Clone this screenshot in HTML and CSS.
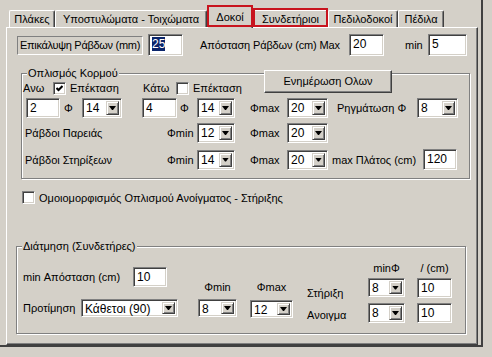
FILE: index.html
```html
<!DOCTYPE html>
<html lang="el">
<head>
  <meta charset="UTF-8">
  <title>Συνδετήριοι</title>
  <link rel="stylesheet" href="styles.css">
</head>
<body>
  <div class="window">
    <div class="tabs">
      <div class="tab w46">Πλάκες</div>
      <div class="tab w152">Υποστυλώματα - Τοιχώματα</div>
      <div class="tab active marked w46">Δοκοί</div>
      <div class="tab marked up w75">Συνδετήριοι</div>
      <div class="tab w70">Πεδιλοδοκοί</div>
      <div class="tab w46">Πέδιλα</div>
    </div>

    <div class="panel">
      <div class="row r-cover">
        <div class="lblbox ml10 w126">Επικάλυψη Ράβδων (mm)</div>
        <div class="edit ml5 w35 h22"><span class="sel">25</span></div>
        <span class="lbl ml17 w149 tight">Απόσταση Ράβδων (cm) Max</span>
        <div class="edit w35 h22">20</div>
        <span class="lbl ml21 w23">min</span>
        <div class="edit w39 h22">5</div>
      </div>

      <div class="group g-web">
        <div class="legend">Οπλισμός Κορμού</div>
        <div class="row r-a">
          <span class="lbl ml1 w30">Ανω</span>
          <div class="chk"><svg width="7" height="7" viewBox="0 0 7 7"><path d="M0.5 3 L2.5 5 L6.5 1" stroke="#000" stroke-width="2" fill="none"/></svg></div>
          <span class="lbl ml4 w73">Επέκταση</span>
          <span class="lbl w33">Κάτω</span>
          <div class="chk"></div>
          <span class="lbl ml4 w71">Επέκταση</span>
          <div class="btn">Ενημέρωση Ολων</div>
        </div>
        <div class="row r-b">
          <div class="edit ml4 w34 h20">2</div>
          <span class="lbl ml4 w18">Φ</span>
          <div class="combo w40 h20"><span class="val">14</span><span class="drop"></span></div>
          <div class="edit ml20 w35 h20">4</div>
          <span class="lbl ml3 w17">Φ</span>
          <div class="combo w38 h20"><span class="val">14</span><span class="drop"></span></div>
          <span class="lbl ml15 w37">Φmax</span>
          <div class="combo w41 h20"><span class="val">20</span><span class="drop"></span></div>
          <span class="lbl ml9 w80">Ρηγμάτωση Φ</span>
          <div class="combo w41 h20"><span class="val">8</span><span class="drop"></span></div>
        </div>
        <div class="row r-c">
          <span class="lbl ml3 w142">Ράβδοι Παρειάς</span>
          <span class="lbl w30">Φmin</span>
          <div class="combo w38 h20"><span class="val">12</span><span class="drop"></span></div>
          <span class="lbl ml15 w37">Φmax</span>
          <div class="combo w41 h20"><span class="val">20</span><span class="drop"></span></div>
        </div>
        <div class="row r-d">
          <span class="lbl ml3 w142">Ράβδοι Στηρίξεων</span>
          <span class="lbl w30">Φmin</span>
          <div class="combo w38 h20"><span class="val">14</span><span class="drop"></span></div>
          <span class="lbl ml15 w37">Φmax</span>
          <div class="combo w41 h20"><span class="val">20</span><span class="drop"></span></div>
          <span class="lbl ml4 w91">max Πλάτος (cm)</span>
          <div class="edit w34 h21">120</div>
        </div>
      </div>

      <div class="row r-uniform">
        <div class="chk"></div>
        <span class="lbl ml4">Ομοιομορφισμός Οπλισμού Ανοίγματος - Στήριξης</span>
      </div>

      <div class="group g-shear">
        <div class="legend">Διάτμηση (Συνδετήρες)</div>
        <div class="cols">
          <div class="col ml6">
            <div class="row mt15">
              <span class="lbl w110">min Απόσταση (cm)</span>
              <div class="edit w34 h20">10</div>
            </div>
            <div class="row mt12">
              <span class="lbl w58">Προτίμηση</span>
              <div class="combo w97 h18"><span class="val">Κάθετοι (90)</span><span class="drop"></span></div>
            </div>
          </div>
          <div class="col ml20 w39">
            <span class="lbl head mt29">Φmin</span>
            <div class="combo mt6 h18"><span class="val">8</span><span class="drop"></span></div>
          </div>
          <div class="col ml13 w43">
            <span class="lbl head mt29">Φmax</span>
            <div class="combo mt7 h18"><span class="val">12</span><span class="drop"></span></div>
          </div>
          <div class="col ml14 w38">
            <span class="lbl mt35">Στήριξη</span>
            <span class="lbl mt10">Ανοιγμα</span>
          </div>
          <div class="col ml23 w37">
            <span class="lbl head mt10">minΦ</span>
            <div class="combo mt4 h19"><span class="val">8</span><span class="drop"></span></div>
            <div class="combo mt6 h20"><span class="val">8</span><span class="drop"></span></div>
          </div>
          <div class="col ml12 w35">
            <span class="lbl head mt10">/ (cm)</span>
            <div class="edit mt4 h20">10</div>
            <div class="edit mt5 h20">10</div>
          </div>
        </div>
      </div>
    </div>
  </div>
</body>
</html>
```

FILE: styles.css
```css
* {
  margin: 0;
  padding: 0;
  box-sizing: border-box;
}

html, body {
  width: 492px;
  height: 357px;
  overflow: hidden;
}

body {
  background-color: #d4d0c8;
  font-family: "Liberation Sans", Arial, sans-serif;
  font-size: 11px;
  color: #000;
}

.window {
  width: 483px;
  height: 347px;
  border-right: 2px solid #404040;
  border-bottom: 2px solid #404040;
}

/* tab strip */
.tabs {
  display: flex;
  align-items: flex-end;
  height: 27px;
  padding-left: 9px;
}

.tab {
  position: relative;
  height: 17px;
  border: 1px solid;
  border-bottom: none;
  border-color: #fff #404040 transparent #fff;
  border-radius: 2px 2px 0 0;
  box-shadow: inset -1px 0 0 #808080;
  text-align: center;
  line-height: 16px;
  white-space: nowrap;
  flex-shrink: 0;
}

.tab.active {
  height: 23px;
  margin-bottom: -1px;
  z-index: 1;
  background-color: #d4d0c8;
  line-height: 22px;
}

.marked::after {
  content: '';
  position: absolute;
  left: -1px;
  right: -1px;
  top: -1px;
  bottom: 1px;
  border: 2px solid #c8141e;
}

.marked.up::after {
  top: -3px;
  bottom: 0;
}

/* page */
.panel {
  margin-left: 6px;
  width: 472px;
  height: 318px;
  border: 1px solid;
  border-color: #fff #404040 #404040 #fff;
  box-shadow: inset -1px -1px 0 #808080;
  display: flex;
  flex-direction: column;
  align-items: flex-start;
}

.row {
  display: flex;
  align-items: center;
  flex-shrink: 0;
}

.lbl {
  flex-shrink: 0;
  white-space: nowrap;
  line-height: 12px;
  height: 12px;
}

.lbl.head {
  text-align: center;
}

.tight {
  letter-spacing: -0.15px;
}

.lblbox {
  height: 19px;
  border: 1px solid;
  border-color: #808080 #fff #fff #808080;
  padding-left: 2px;
  line-height: 17px;
  letter-spacing: -0.3px;
  white-space: nowrap;
  flex-shrink: 0;
}

.edit {
  background-color: #fff;
  border: 1px solid;
  border-color: #808080 #fff #fff #808080;
  box-shadow: inset 1px 1px 0 #404040, inset -1px -1px 0 #d4d0c8;
  padding: 2px 3px;
  font-size: 12px;
  line-height: 14px;
  flex-shrink: 0;
}

.sel {
  background-color: #0a246a;
  color: #fff;
}

.combo {
  display: flex;
  background-color: #fff;
  border: 1px solid;
  border-color: #808080 #fff #fff #808080;
  box-shadow: inset 1px 1px 0 #404040, inset -1px -1px 0 #d4d0c8;
  padding: 2px;
  font-size: 12px;
  flex-shrink: 0;
}

.combo .val {
  flex: 1;
  padding: 1px 0 0 1px;
  line-height: 12px;
  white-space: nowrap;
}

.combo .drop {
  width: 13px;
  flex-shrink: 0;
  background-color: #d4d0c8;
  border: 1px solid;
  border-color: #d4d0c8 #404040 #404040 #d4d0c8;
  box-shadow: inset 1px 1px 0 #fff, inset -1px -1px 0 #808080;
  display: flex;
  align-items: center;
  justify-content: center;
}

.combo .drop::after {
  content: '';
  width: 7px;
  height: 4px;
  background-color: #000;
  clip-path: polygon(0 0, 7px 0, 4px 4px, 3px 4px);
}

.chk {
  width: 13px;
  height: 13px;
  flex-shrink: 0;
  background-color: #fff;
  border: 1px solid;
  border-color: #808080 #fff #fff #808080;
  box-shadow: inset 1px 1px 0 #404040, inset -1px -1px 0 #d4d0c8;
  display: flex;
  align-items: center;
  justify-content: center;
}

.btn {
  width: 128px;
  height: 23px;
  flex-shrink: 0;
  align-self: flex-end;
  margin-bottom: 2px;
  background-color: #d4d0c8;
  border: 1px solid;
  border-color: #fff #404040 #404040 #fff;
  box-shadow: inset -1px -1px 0 #808080;
  text-align: center;
  line-height: 20px;
}

/* group boxes */
.group {
  border: 1px solid #808080;
  box-shadow: inset 1px 1px 0 #fff, 1px 1px 0 #fff;
  display: flex;
  flex-direction: column;
  align-items: flex-start;
  flex-shrink: 0;
}

.legend {
  background-color: #d4d0c8;
  padding: 0 1px;
  height: 12px;
  line-height: 12px;
  margin: -7px 0 0 5px;
  white-space: nowrap;
}

.r-cover { margin-top: 6px; height: 22px; }
.g-web { margin: 17px 0 0 14px; width: 449px; height: 106px; }
.r-a { margin-top: 2px; height: 14px; }
.r-b { margin-top: 3px; height: 20px; }
.r-c { margin-top: 5px; height: 20px; }
.r-d { margin-top: 6px; height: 21px; }
.r-uniform { margin: 12px 0 0 15px; height: 13px; }
.g-shear { margin: 42px 0 0 9px; width: 450px; height: 88px; }

.cols {
  display: flex;
  align-items: flex-start;
}

.col {
  display: flex;
  flex-direction: column;
  align-items: stretch;
  flex-shrink: 0;
}

/* sizes */
.w17 { width: 17px; }
.w18 { width: 18px; }
.w23 { width: 23px; }
.w30 { width: 30px; }
.w33 { width: 33px; }
.w34 { width: 34px; }
.w35 { width: 35px; }
.w37 { width: 37px; }
.w38 { width: 38px; }
.w39 { width: 39px; }
.w40 { width: 40px; }
.w41 { width: 41px; }
.w43 { width: 43px; }
.w46 { width: 46px; }
.w58 { width: 58px; }
.w70 { width: 70px; }
.w71 { width: 71px; }
.w73 { width: 73px; }
.w75 { width: 75px; }
.w80 { width: 80px; }
.w91 { width: 91px; }
.w97 { width: 97px; }
.w110 { width: 110px; }
.w126 { width: 126px; }
.w142 { width: 142px; }
.w149 { width: 149px; }
.w152 { width: 152px; }

.h18 { height: 18px; }
.h19 { height: 19px; }
.h20 { height: 20px; }
.h21 { height: 21px; }
.h22 { height: 22px; }

.ml1 { margin-left: 1px; }
.ml3 { margin-left: 3px; }
.ml4 { margin-left: 4px; }
.ml5 { margin-left: 5px; }
.ml6 { margin-left: 6px; }
.ml9 { margin-left: 9px; }
.ml10 { margin-left: 10px; }
.ml12 { margin-left: 12px; }
.ml13 { margin-left: 13px; }
.ml14 { margin-left: 14px; }
.ml15 { margin-left: 15px; }
.ml17 { margin-left: 17px; }
.ml20 { margin-left: 20px; }
.ml21 { margin-left: 21px; }
.ml23 { margin-left: 23px; }

.mt4 { margin-top: 4px; }
.mt5 { margin-top: 5px; }
.mt6 { margin-top: 6px; }
.mt7 { margin-top: 7px; }
.mt10 { margin-top: 10px; }
.mt12 { margin-top: 12px; }
.mt15 { margin-top: 15px; }
.mt29 { margin-top: 29px; }
.mt35 { margin-top: 35px; }
```
